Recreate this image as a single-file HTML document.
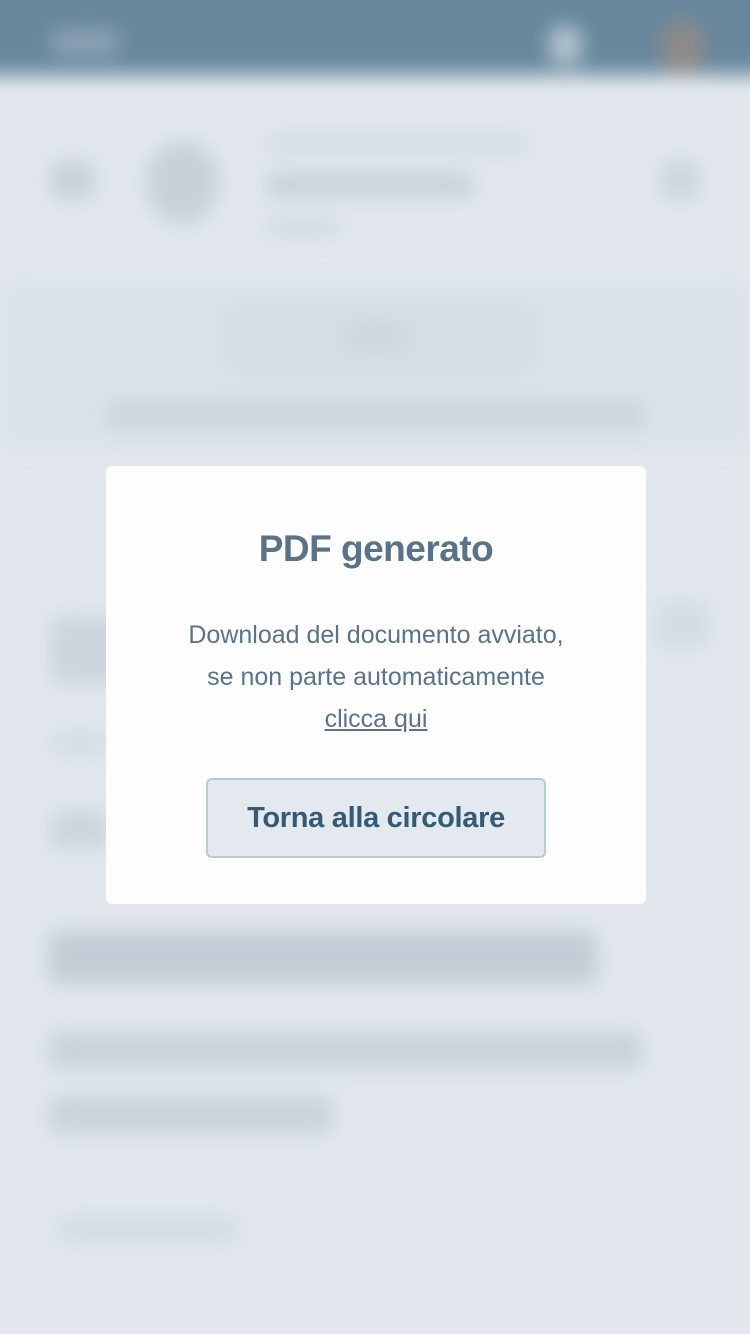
<!DOCTYPE html>
<html><head><meta charset="utf-8"><style>
*{margin:0;padding:0;box-sizing:border-box}
body{width:750px;height:1334px;background:#e3e8ef;overflow:hidden;position:relative;font-family:"Liberation Sans",sans-serif}
.bg{position:absolute;inset:0;filter:blur(10px)}
.b{position:absolute;background:#ccd4dd;border-radius:10px}
.top{position:absolute;left:-30px;top:-30px;width:810px;height:105px;background:#67879c}
.modal{position:absolute;left:106px;top:466px;width:540px;height:438px;background:#fdfdfe;border-radius:6px;text-align:center;color:#5a7389}
h1{font-size:37px;font-weight:bold;margin-top:60px;line-height:46px;color:#5a7389;letter-spacing:-0.5px}
p{font-size:25px;line-height:42px;margin-top:42px}
u{text-decoration:underline}
.btn{position:absolute;left:100px;top:312px;width:340px;height:80px;border:2px solid #b9c9d6;background:#e4e9f0;border-radius:6px;font-size:29px;font-weight:bold;color:#345a74;line-height:76px;letter-spacing:-0.3px}
</style></head><body>
<div class="bg">
<div class="top"></div>
<div class="b" style="left:50px;top:30px;width:70px;height:25px;background:#8fa4b6"></div>
<div class="b" style="left:548px;top:25px;width:35px;height:40px;background:#b7c6d2;border-radius:50%"></div>
<div class="b" style="left:660px;top:20px;width:45px;height:55px;background:#8f8a88;border-radius:50%"></div>
<div class="b" style="left:50px;top:160px;width:45px;height:40px;background:#c7d0d9"></div>
<div class="b" style="left:145px;top:140px;width:75px;height:85px;border-radius:50%;background:#c7d0d9"></div>
<div class="b" style="left:265px;top:135px;width:265px;height:18px;background:#d2d9e1"></div>
<div class="b" style="left:265px;top:172px;width:210px;height:26px;background:#c7d0d9"></div>
<div class="b" style="left:265px;top:218px;width:75px;height:18px;background:#d0d7df"></div>
<div class="b" style="left:660px;top:160px;width:40px;height:40px"></div>
<div class="b" style="left:0;top:280px;width:750px;height:170px;background:#dce2ea"></div>
<div class="b" style="left:225px;top:300px;width:310px;height:75px;background:#d6dde6"></div>
<div class="b" style="left:345px;top:325px;width:60px;height:25px"></div>
<div class="b" style="left:105px;top:400px;width:540px;height:30px;background:#ccd4dd"></div>
<div class="b" style="left:50px;top:615px;width:100px;height:70px;background:#ccd4dd"></div>
<div class="b" style="left:50px;top:730px;width:60px;height:25px;background:#d4dbe3"></div>
<div class="b" style="left:50px;top:810px;width:60px;height:40px;background:#ccd4dd"></div>
<div class="b" style="left:655px;top:600px;width:55px;height:50px;background:#d4dbe3"></div>
<div class="b" style="left:48px;top:930px;width:550px;height:55px;background:#c3ccd6"></div>
<div class="b" style="left:48px;top:1030px;width:595px;height:40px;background:#cad2db"></div>
<div class="b" style="left:48px;top:1095px;width:285px;height:40px;background:#cad2db"></div>
<div class="b" style="left:55px;top:1215px;width:185px;height:28px;background:#d4dbe3"></div>
</div>
<div class="modal">
<h1>PDF generato</h1>
<p>Download del documento avviato,<br>se non parte automaticamente<br><u>clicca qui</u></p>
<div class="btn">Torna alla circolare</div>
</div>
</body></html>
